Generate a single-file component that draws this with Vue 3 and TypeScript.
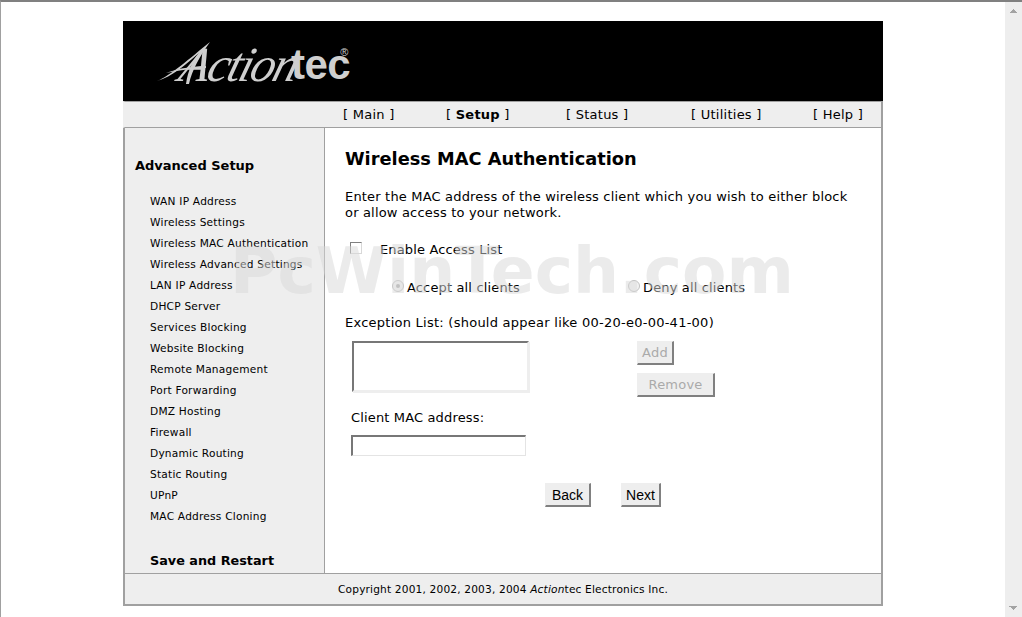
<script setup lang="ts">
const navItems: { label: string; bold?: boolean; width: number }[] = [
  { label: 'Main', width: 103 },
  { label: 'Setup', bold: true, width: 120 },
  { label: 'Status', width: 125 },
  { label: 'Utilities', width: 122 },
  { label: 'Help', width: 60 },
]
const links: string[] = [
  'WAN IP Address', 'Wireless Settings', 'Wireless MAC Authentication', 'Wireless Advanced Settings',
  'LAN IP Address', 'DHCP Server', 'Services Blocking', 'Website Blocking', 'Remote Management',
  'Port Forwarding', 'DMZ Hosting', 'Firewall', 'Dynamic Routing', 'Static Routing', 'UPnP', 'MAC Address Cloning',
]
</script>

<template>
  <div class="window">
    <main class="page">
      <div class="frame">
        <header class="banner">
          <div class="logo">
            <svg class="swash" width="60" height="50" viewBox="0 0 60 50"><path d="M1 41C14 36 34 18 54 2C44 16 36 30 33 44L30 44C32 30 37 20 43 13C30 24 16 37 1 41Z" fill="#cfcfcf"/><path d="M10 33C24 28 38 26 50 26L50 28C38 28 24 30 10 33Z" fill="#cfcfcf"/></svg>
            <span class="script">Action</span><span class="tec">tec</span><sup class="reg">®</sup>
          </div>
        </header>
        <nav class="nav">
          <span v-for="n in navItems" :key="n.label" class="nav-item" :style="{ width: n.width + 'px' }">[ <span :class="{ strong: n.bold }">{{ n.label }}</span> ]</span>
        </nav>
        <div class="middle">
          <aside class="side">
            <h3 class="side-title">Advanced Setup</h3>
            <ul class="links">
              <li v-for="l in links" :key="l">{{ l }}</li>
            </ul>
            <h3 class="save">Save and Restart</h3>
          </aside>
          <section class="content">
            <h2 class="title">Wireless MAC Authentication</h2>
            <p class="intro">Enter the MAC address of the wireless client which you wish to either block or allow access to your network.</p>
            <label class="enable"><span class="check"></span>Enable Access List</label>
            <div class="radios">
              <label class="radio-a"><span class="radio on"></span>Accept all clients</label>
              <label class="radio-b"><span class="radio"></span>Deny all clients</label>
            </div>
            <p class="exception">Exception List: (should appear like 00-20-e0-00-41-00)</p>
            <div class="list-row">
              <div class="listbox"></div>
              <div class="list-btns">
                <button class="btn disabled add" type="button">Add</button>
                <button class="btn disabled remove" type="button">Remove</button>
              </div>
            </div>
            <p class="client">Client MAC address:</p>
            <div class="textbox"></div>
            <div class="actions">
              <button class="btn back" type="button">Back</button>
              <button class="btn next" type="button">Next</button>
            </div>
          </section>
        </div>
        <footer class="footer">Copyright 2001, 2002, 2003, 2004 <i class="foot-i">Action</i>tec Electronics Inc.</footer>
      </div>
      <div class="watermark">PcWinTech.com</div>
    </main>
    <div class="scrollbar">
      <svg width="17" height="17" viewBox="0 0 17 17"><path d="M5 11h7v-1h-1v-1h-1V8H9V7H8v1H7v1H6v1H5z" fill="#a3a3a3"/></svg>
      <svg width="17" height="17" viewBox="0 0 17 17"><path d="M4 6h8v1h-1v1h-1v1H9v1H8V9H7V8H6V7H4z" fill="#a3a3a3"/></svg>
    </div>
  </div>
</template>

<style>
html, body { margin: 0; overflow: hidden; background: #fff; }
</style>

<style scoped>
.window {
  width: 1022px; height: 617px; box-sizing: border-box; display: flex;
  border-top: 2px solid #808080; border-left: 1px solid #a0a0a0;
  font-family: "DejaVu Sans", Verdana, sans-serif; color: #000; overflow: hidden;
}
.page { position: relative; width: 1004px; padding: 19px 0 0 122px; box-sizing: border-box; }
.scrollbar { width: 17px; background: #eee; display: flex; flex-direction: column; justify-content: space-between; }
.frame { width: 760px; }
.banner { height: 80px; background: #000; position: relative; }
.logo { position: absolute; left: 33px; top: 15px; display: flex; color: #cfcfcf; }
.swash { position: absolute; left: 0; top: 4px; }
.script { font: italic 400 49px/52px "Liberation Serif", serif; letter-spacing: -2px; transform: skewX(-16deg); margin-left: 25px; margin-top: 3px; }
.tec { font: 700 42px/56px "Liberation Sans", sans-serif; letter-spacing: -.5px; margin-left: -6px; margin-top: 1px; }
.reg { font: 400 11px/14px "Liberation Sans", sans-serif; margin: 9px 0 0 -10px; }
.nav {
  box-sizing: border-box; height: 27px; background: #eee; border: solid #a0a0a0; border-width: 1px 2px 1px 2px;
  display: flex; padding-left: 218px; align-items: center; font-size: 13px; letter-spacing: .25px; border-left-color: #eee;
}
.nav-item { white-space: pre; display: block; }
.strong { font-weight: 700; }
.middle { display: flex; height: 445px; border: solid #a0a0a0; border-width: 0 2px; }
.side { width: 199px; background: #eee; border-right: 1px solid #a0a0a0; overflow: hidden; }
.side-title { margin: 29px 0 0 10px; font-size: 13px; line-height: 18px; }
.links { list-style: none; margin: 16px 0 0 25px; padding: 0; font-size: 10.6px; letter-spacing: .22px; }
.links li { height: 21px; line-height: 21px; white-space: nowrap; }
.save { margin: 25px 0 0 25px; font-size: 12.8px; line-height: 18px; }
.content { flex: 1; padding: 0 20px; position: relative; min-width: 0; }
.title { margin: 19px 0 0; font-size: 17.8px; line-height: 24px; font-weight: 700; }
.intro { margin: 18px 0 0; font-size: 13px; line-height: 16px; width: 510px; letter-spacing: .18px; }
.enable { display: flex; align-items: center; font-size: 13px; margin-top: 19px; height: 18px; letter-spacing: .15px; }
.check { width: 10px; height: 10px; border: 1px solid #808080; border-bottom-color: #d8d8d8; border-right-color: #d8d8d8; margin: -3px 18px 0 5px; background: #fff; }
.radios { display: flex; margin-top: 20px; font-size: 13px; height: 18px; letter-spacing: .15px; }
.radio-a { display: flex; align-items: center; margin-left: 47px; width: 236px; }
.radio-b { display: flex; align-items: center; }
.radio { width: 10px; height: 10px; border-radius: 50%; border: 1px solid #c0c0c0; background: #f4f4f4; margin: -3px 3px 0 0; position: relative; }
.radio.on::after { content: ""; position: absolute; left: 3px; top: 3px; width: 4px; height: 4px; border-radius: 50%; background: #aaa; }
.exception { margin: 18px 0 0; font-size: 13px; line-height: 18px; letter-spacing: .25px; }
.list-row { display: flex; margin-top: 9px; margin-left: 7px; }
.listbox { width: 173px; height: 47px; border: 2px solid; border-color: #777 #eee #eee #777; box-shadow: 1px 1px 0 #eee; background: #fff; }
.list-btns { margin-left: 108px; display: flex; flex-direction: column; align-items: flex-start; gap: 8px; }
.btn {
  font: 14px "Liberation Sans", sans-serif; background: #eee; color: #000; padding: 0;
  border: solid; border-color: #eee #808080 #808080 #eee; border-width: 1px 2px 2px 1px; box-sizing: border-box;
}
.disabled { color: #aaa; font-family: "DejaVu Sans", sans-serif; font-size: 13px; letter-spacing: .2px; }
.add { width: 37px; height: 24px; }
.remove { width: 78px; height: 24px; }
.client { margin: 12px 0 0 6px; font-size: 13px; line-height: 18px; letter-spacing: .15px; }
.textbox { margin: 8px 0 0 6px; border: solid; border-width: 2px 1px 1px 2px; border-color: #777 #e4e4e4 #e4e4e4 #777; width: 172px; height: 18px; }
.actions { display: flex; margin: 27px 0 0 200px; gap: 30px; }
.back { width: 46px; height: 24px; }
.next { width: 40px; height: 24px; }
.footer {
  height: 33px; box-sizing: border-box; background: #eee; border: 2px solid #a0a0a0; border-top-width: 1px;
  text-align: center; font-size: 10.6px; line-height: 30px; letter-spacing: .17px;
}
.foot-i { font-style: italic; }
.watermark {
  position: absolute; left: 229px; top: 234px; font: 700 64.7px/70px "DejaVu Sans", sans-serif; color: rgba(215,215,215,.5);
  white-space: nowrap; pointer-events: none;
}
</style>
